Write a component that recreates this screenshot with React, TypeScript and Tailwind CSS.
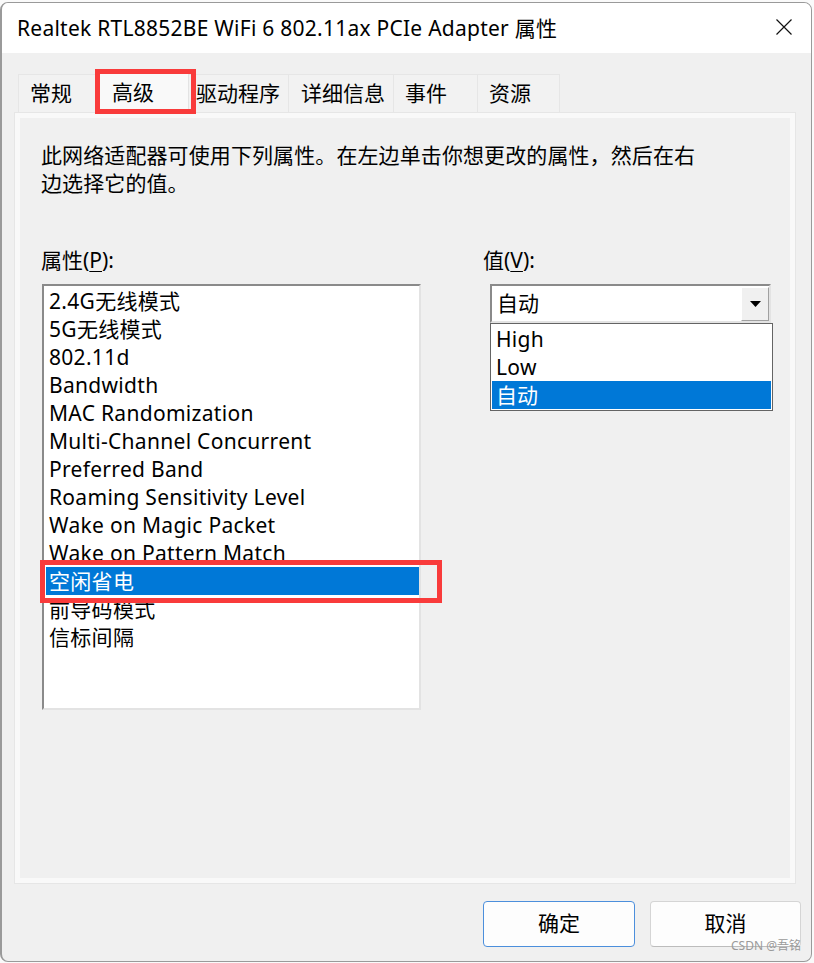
import React from "react";

const items = [
  "2.4G无线模式",
  "5G无线模式",
  "802.11d",
  "Bandwidth",
  "MAC Randomization",
  "Multi-Channel Concurrent",
  "Preferred Band",
  "Roaming Sensitivity Level",
  "Wake on Magic Packet",
  "Wake on Pattern Match",
  "空闲省电",
  "前导码模式",
  "信标间隔",
];

const tabs = [
  { label: "常规", w: "w-[78px]", pl: "pl-[11px]" },
  { label: "高级", w: "w-[93px]", pl: "pl-[15px]", sel: true },
  { label: "驱动程序", w: "w-[100px]", pl: "pl-[7px]" },
  { label: "详细信息", w: "w-[105px]", pl: "pl-[12px]" },
  { label: "事件", w: "w-[84px]", pl: "pl-[11px]" },
  { label: "资源", w: "w-[82px]", pl: "pl-[11px]" },
];

export default function App() {
  return (
    <div
      className="relative w-[814px] h-[963px] bg-[#fafafa] overflow-hidden pt-[2px] pl-0 text-black"
      style={{ fontFamily: '"Noto Sans", "Noto Sans CJK SC", sans-serif' }}
    >
      <div className="relative w-[812px] h-[960px] rounded-[8px] border border-l-2 border-[#9a9a9a] bg-[#f0f0f0] overflow-hidden flex flex-col">
        {/* Title bar */}
        <div className="h-[50px] bg-white flex items-center justify-between pl-[15px] pr-[19px] shrink-0">
          <span className="text-[21px] leading-none tracking-[0.25px]">
            Realtek RTL8852BE WiFi 6 802.11ax PCIe Adapter 属性
          </span>
          <svg width="16" height="16" viewBox="0 0 16 16" className="mt-[-2px]">
            <path d="M0.5 0.5 L15.5 15.5 M15.5 0.5 L0.5 15.5" stroke="#111" strokeWidth="1.2" fill="none" />
          </svg>
        </div>

        {/* Tabs */}
        <div className="flex items-end h-[41px] mt-[18px] ml-[16px] shrink-0">
          {tabs.map((t) =>
            t.sel ? (
              <div
                key={t.label}
                className={`${t.w} ${t.pl} h-[41px] bg-[#f9f9f9] border border-b-0 border-[#e3e3e3] flex items-center text-[21px] leading-none`}
              >
                {t.label}
              </div>
            ) : (
              <div
                key={t.label}
                className={`${t.w} ${t.pl} h-[38px] bg-[#f2f2f2] border border-b-0 border-l-0 first:border-l border-[#e6e6e6] flex items-center text-[21px] leading-none`}
              >
                {t.label}
              </div>
            )
          )}
        </div>

        {/* Panel */}
        <div className="ml-[12px] w-[782px] h-[772px] border border-[#e6e6e6] bg-[#f9f9f9] p-[5px] shrink-0">
          <div className="w-full h-full bg-[#f0f0f0] pl-[21px] pt-[23px]">
            <div className="text-[21px] leading-[28px] tracking-[0.1px]">
              <div>此网络适配器可使用下列属性。在左边单击你想更改的属性，然后在右</div>
              <div>边选择它的值。</div>
            </div>

            <div className="flex mt-[49px]">
              {/* left column */}
              <div className="w-[442px] shrink-0">
                <div className="h-[28px] text-[21px] leading-[28px]">
                  属性(<span className="underline underline-offset-[3px] decoration-1">P</span>):
                </div>
                <div className="mt-[10px] ml-[1px] w-[379px] h-[426px] border-2 border-t-[#8a8a8a] border-l-[#8a8a8a] border-r-[#e3e3e3] border-b-[#e3e3e3] bg-white pt-[1px] pl-[2px]">
                  {items.map((it) => (
                    <div
                      key={it}
                      className={`h-[28px] pl-[3px] text-[21px] leading-[28px] whitespace-nowrap tracking-[0.3px] ${
                        it === "空闲省电" ? "bg-[#0078d7] text-white" : ""
                      }`}
                    >
                      {it}
                    </div>
                  ))}
                </div>
              </div>

              {/* right column */}
              <div className="relative">
                <div className="h-[28px] text-[21px] leading-[28px]">
                  值(<span className="underline underline-offset-[3px] decoration-1">V</span>):
                </div>
                <div className="relative mt-[10px] ml-[7px] w-[281px] h-[39px] border-2 border-t-[#8a8a8a] border-l-[#8a8a8a] border-r-[#e3e3e3] border-b-[#e3e3e3] bg-white flex items-center justify-between pl-[5px]">
                  <span className="text-[21px] leading-none">自动</span>
                  <div className="w-[28px] h-[34px] bg-[#f0f0f0] border border-t-white border-l-white border-r-[#a0a0a0] border-b-[#a0a0a0] flex items-center justify-center">
                    <svg width="11" height="6" viewBox="0 0 11 6">
                      <path d="M0 0 H11 L5.5 6 Z" fill="#000" />
                    </svg>
                  </div>
                  {/* dropdown list */}
                  <div className="absolute left-[-2px] top-[37px] w-[283px] h-[88px] border border-[#646464] bg-white pt-[1px] px-[1px]">
                    <div className="h-[28px] pl-[4px] text-[21px] leading-[28px] tracking-[0.3px]">High</div>
                    <div className="h-[28px] pl-[4px] text-[21px] leading-[28px] tracking-[0.3px]">Low</div>
                    <div className="h-[28px] pl-[4px] text-[21px] leading-[28px] bg-[#0078d7] text-white">自动</div>
                  </div>
                </div>
              </div>
            </div>
          </div>
        </div>

        {/* Buttons */}
        <div className="flex justify-end gap-[15px] pr-[10px] mt-[17px]">
          <div className="w-[152px] h-[46px] rounded-[4px] border border-[#4c8fdc] bg-[#fdfdfd] flex items-center justify-center text-[21px]">
            确定
          </div>
          <div className="w-[151px] h-[46px] rounded-[4px] border border-[#d5d5d5] border-b-[#bcbcbc] bg-[#fdfdfd] flex items-center justify-center text-[21px]">
            取消
          </div>
        </div>
      </div>

      {/* Red annotation boxes */}
      <div className="absolute left-[95px] top-[69px] w-[101px] h-[45px] border-[5px] border-[#f93b3b]" />
      <div className="absolute left-[40px] top-[560px] w-[402px] h-[43px] border-[5px] border-[#f93b3b]" />

      {/* Watermark */}
      <div className="absolute left-[731px] top-[940px] text-[12px] leading-none text-[#9a9a9a] whitespace-nowrap">
        CSDN @吾铭
      </div>
    </div>
  );
}
